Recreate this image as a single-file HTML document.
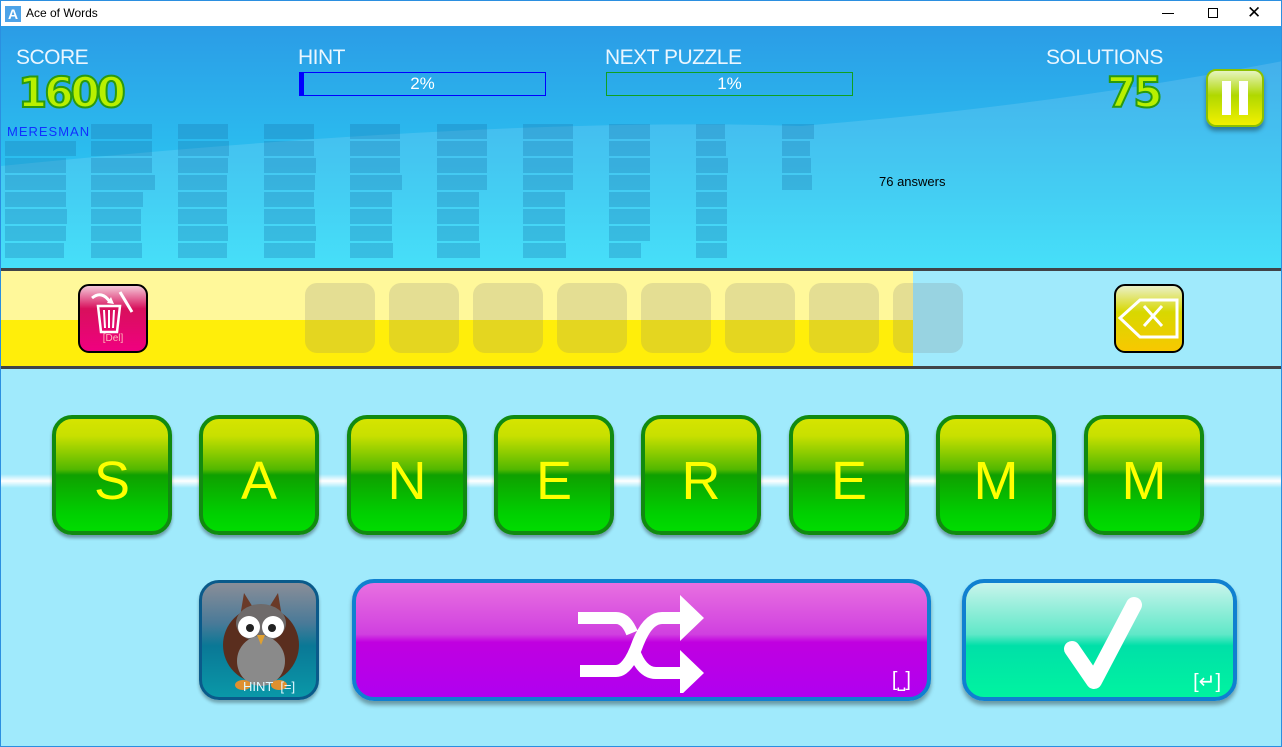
<!DOCTYPE html>
<html><head><meta charset="utf-8"><style>
*{margin:0;padding:0;box-sizing:border-box}
body{width:1282px;height:747px;overflow:hidden;position:relative;font-family:"Liberation Sans",sans-serif;background:#a0eafc}
.abs{position:absolute}
#title{left:0;top:0;width:1282px;height:26px;background:#fff;border:1px solid #2b8fe0;border-bottom:none}
#top{left:0;top:26px;width:1282px;height:242px;background:linear-gradient(#2b9ce6,#2bc8f2 70%,#2ddcf8);overflow:hidden;border-left:1px solid #2b8fe0;border-right:1px solid #2b8fe0}
.lbl{color:#eaf6ff;font-size:21px;letter-spacing:-0.5px}
.big{font-weight:bold;color:#b8f000;-webkit-text-stroke:2px #2a9a10;font-size:42px;font-family:"DejaVu Sans",sans-serif;letter-spacing:-3px}
.bar{position:absolute;height:15px;background:rgba(20,110,170,0.28)}
.slot{position:absolute;top:283px;width:70px;height:70px;border-radius:12px;background:rgba(120,120,120,0.2)}
.tile{position:absolute;top:415px;width:120px;height:120px;border-radius:20px;border:4px solid #118a10;background:linear-gradient(#d6e400 0%,#c8e000 15%,#52b800 45%,#0fa000 50%,#00d000 85%,#00dc00);box-shadow:0 3px 3px rgba(0,0,0,.35);color:#ffff00;font-size:54px;text-align:center;line-height:124px}
</style></head><body>
<div id="title" class="abs">
 <div class="abs" style="left:4px;top:5px;width:16px;height:16px;background:#4da3e8;color:#fff;font-size:14px;font-weight:bold;text-align:center;line-height:16px">A</div>
 <div class="abs" style="left:25px;top:5px;font-size:12px;color:#000">Ace of Words</div>
 <div class="abs" style="left:1161px;top:12px;width:12px;height:1px;background:#000"></div>
 <div class="abs" style="left:1207px;top:7px;width:10px;height:10px;border:1px solid #000"></div>
 <div class="abs" style="left:1246px;top:2px;font-size:17px;color:#000">✕</div>
</div>
<div id="top" class="abs">
 <svg class="abs" style="left:0;top:0" width="1282" height="242"><path d="M0 140 Q500 90 800 100 Q1050 80 1282 35 L1282 242 L0 242Z" fill="rgba(255,255,255,0.12)"/></svg>
 <div class="abs lbl" style="left:15px;top:20px">SCORE</div>
 <div class="abs big" style="left:17px;top:42px">1600</div>
 <div class="abs lbl" style="left:297px;top:20px">HINT</div>
 <div class="abs" style="left:298px;top:46px;width:247px;height:24px;border:1px solid #0000ff;color:#fff;font-size:17px;text-align:center;line-height:22px"><div class="abs" style="left:0;top:0;width:4px;height:22px;background:#0000ff"></div>2%</div>
 <div class="abs lbl" style="left:604px;top:20px">NEXT PUZZLE</div>
 <div class="abs" style="left:605px;top:46px;width:247px;height:24px;border:1px solid #10a020;color:#fff;font-size:17px;text-align:center;line-height:22px">1%</div>
 <div class="abs lbl" style="left:1045px;top:20px">SOLUTIONS</div>
 <div class="abs big" style="left:1106px;top:42px">75</div>
 <div class="abs" style="left:1205px;top:43px;width:58px;height:58px;border-radius:10px;background:linear-gradient(#e6f4c0,#b0d800 45%,#f2f000);border:2px solid #8cc000;box-shadow:0 4px 4px rgba(0,0,0,.35)"><div class="abs" style="left:14px;top:10px;width:9px;height:34px;background:#fff"></div><div class="abs" style="left:31px;top:10px;width:9px;height:34px;background:#fff"></div></div>
 <div class="abs" style="left:6px;top:98px;color:#1030ff;font-size:13px;letter-spacing:1px">MERESMAN</div>
 <div class="abs" style="left:878px;top:148px;color:#000;font-size:13px">76 answers</div>
</div>
<div id="bars"></div>
<script>
var cols=[[5,[0,71,61,61,61,62,61,59]],[91,[61,61,61,64,52,50,50,51]],[178,[50,51,50,49,49,49,50,49]],[264,[50,50,52,51,50,51,52,51]],[350,[50,50,50,52,42,42,42,43]],[437,[50,50,50,50,42,42,42,43]],[523,[50,50,50,50,42,42,42,43]],[609,[41,41,41,41,41,41,41,32]],[696,[29,30,32,31,31,31,31,31]],[782,[32,28,29,30]]];
var h='';cols.forEach(function(c){c[1].forEach(function(w,i){if(w)h+='<div class="bar" style="left:'+c[0]+'px;top:'+(124+i*17)+'px;width:'+w+'px"></div>'})});
document.getElementById('bars').innerHTML=h;
</script>
<div class="abs" style="left:0;top:268px;width:1282px;height:3px;background:#404448"></div>
<div class="abs" style="left:0;top:271px;width:913px;height:49px;background:#fff89a"></div>
<div class="abs" style="left:0;top:320px;width:913px;height:46px;background:#ffee0a"></div>
<div class="abs" style="left:0;top:366px;width:1282px;height:3px;background:#404448"></div>
<div class="slot" style="left:305px"></div><div class="slot" style="left:389px"></div><div class="slot" style="left:473px"></div><div class="slot" style="left:557px"></div><div class="slot" style="left:641px"></div><div class="slot" style="left:725px"></div><div class="slot" style="left:809px"></div><div class="slot" style="left:893px"></div>
<div class="abs" style="left:78px;top:284px;width:70px;height:69px;border:2px solid #000;border-radius:11px;background:linear-gradient(#f4c8d8,#d8105c 35%,#f00080);color:#fbb;font-size:10px;text-align:center">
 <svg width="66" height="52" viewBox="0 0 66 52"><path d="M12 12 Q22 4 30 16" stroke="#fff" stroke-width="3" fill="none"/><path d="M27 17 L34 18 L31 11Z" fill="#fff"/><path d="M18 20 H40 L37 46 H21Z" stroke="#fff" stroke-width="2.5" fill="none"/><path d="M24 24 L25 42 M29 24 V42 M34 24 L33 42" stroke="#fff" stroke-width="2"/><path d="M40 6 L52 26" stroke="#fff" stroke-width="3"/></svg>
 <div style="margin-top:-8px">[Del]</div></div>
<div class="abs" style="left:1114px;top:284px;width:70px;height:69px;border:2px solid #000;border-radius:11px;background:linear-gradient(#eaf0c8,#d8d800 40%,#f8c800)">
 <svg width="66" height="66"><path d="M4 32 L24 14 H61 V51 H24Z" stroke="#fff" stroke-width="3" fill="none"/><path d="M28 20 L46 40 M46 20 L28 40" stroke="#fff" stroke-width="3"/></svg></div>
<div class="abs" style="left:0;top:474px;width:1282px;height:14px;background:linear-gradient(rgba(255,255,255,0),#fff,rgba(255,255,255,0))"></div>
<div class="tile" style="left:52px">S</div><div class="tile" style="left:199px">A</div><div class="tile" style="left:347px">N</div><div class="tile" style="left:494px">E</div><div class="tile" style="left:641px">R</div><div class="tile" style="left:789px">E</div><div class="tile" style="left:936px">M</div><div class="tile" style="left:1084px">M</div>
<div class="abs" style="left:199px;top:580px;width:120px;height:120px;border:3px solid #0a5a8a;border-radius:20px;background:linear-gradient(#8a8e98,#4a7a98 35%,#0a7896 55%,#0a98a8);box-shadow:0 3px 3px rgba(0,0,0,.3)">
 <svg class="abs" style="left:0;top:0" width="114" height="114"><ellipse cx="59" cy="62" rx="38" ry="38" fill="#5a2e1e"/><path d="M38 34 L42 10 L52 26Z M80 34 L76 10 L66 26Z" fill="#6a3a28"/><ellipse cx="59" cy="40" rx="25" ry="19" fill="#6e6a6a"/><ellipse cx="59" cy="78" rx="24" ry="25" fill="#8a8a8a"/><circle cx="47" cy="44" r="11" fill="#fff"/><circle cx="71" cy="44" r="11" fill="#fff"/><circle cx="48" cy="45" r="4" fill="#222"/><circle cx="70" cy="45" r="4" fill="#222"/><path d="M55 52 H63 L59 62Z" fill="#e0a030"/><ellipse cx="41" cy="102" rx="8" ry="5" fill="#e09030"/><ellipse cx="77" cy="102" rx="8" ry="5" fill="#e09030"/></svg>
 <div class="abs" style="left:41px;top:96px;color:#e0f8ff;font-size:13px">HINT &nbsp;[=]</div></div>
<div class="abs" style="left:352px;top:579px;width:579px;height:122px;border:4px solid #1080d0;border-radius:22px;background:linear-gradient(#e870e0,#d040e0 45%,#c000e0 52%,#b000f0);box-shadow:0 4px 4px rgba(0,0,0,.35)">
 <svg class="abs" style="left:220px;top:10px" width="140" height="100"><path d="M2 25 H40 Q50 25 56 40 M58 58 Q66 80 80 80 H108 M4 78 H40 Q52 78 62 50 Q72 25 86 25 H108" stroke="#fff" stroke-width="12" fill="none"/><path d="M104 2 L128 25 L104 48Z M104 57 L128 80 L104 103Z" fill="#fff"/></svg>
 <div class="abs" style="right:16px;top:86px;color:#fff;font-size:20px">[⎵]</div></div>
<div class="abs" style="left:962px;top:579px;width:275px;height:122px;border:4px solid #1080d0;border-radius:22px;background:linear-gradient(#c8f4ec,#60e8c8 45%,#00e0a8 55%,#00f4a0);box-shadow:0 4px 4px rgba(0,0,0,.35)">
 <svg class="abs" style="left:90px;top:10px" width="90" height="100"><path d="M16 56 L38 88 L78 12" stroke="#fff" stroke-width="16" stroke-linecap="round" stroke-linejoin="round" fill="none"/></svg>
 <div class="abs" style="right:12px;top:86px;color:#fff;font-size:20px">[↵]</div></div>
<div class="abs" style="left:0;top:26px;width:1px;height:721px;background:#2b8fe0"></div>
<div class="abs" style="right:0;top:26px;width:1px;height:721px;background:#2b8fe0"></div>
<div class="abs" style="left:0;top:746px;width:1282px;height:1px;background:#2b8fe0"></div>
</body></html>
